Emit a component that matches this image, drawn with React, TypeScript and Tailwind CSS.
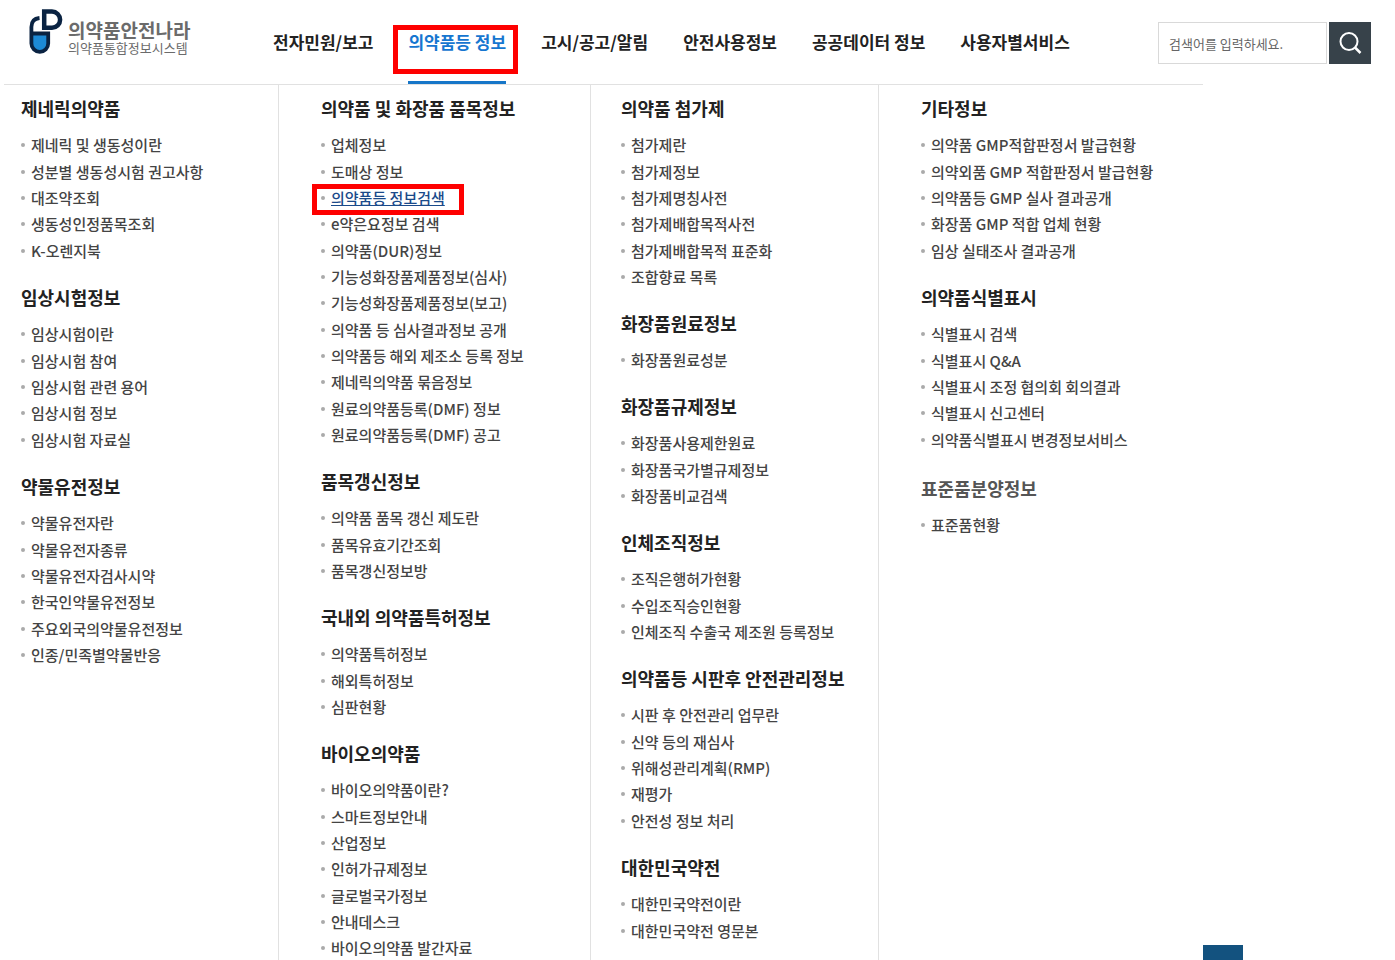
import React from 'react';

type Group = {
  title: string;
  muted?: boolean;
  items: string[];
};

const navItems = [
  '전자민원/보고',
  '의약품등 정보',
  '고시/공고/알림',
  '안전사용정보',
  '공공데이터 정보',
  '사용자별서비스',
];

const columns: { className: string; groups: Group[] }[] = [
  {
    className: 'border-r pl-[17px]',
    groups: [
      {
        title: '제네릭의약품',
        items: ['제네릭 및 생동성이란', '성분별 생동성시험 권고사항', '대조약조회', '생동성인정품목조회', 'K-오렌지북'],
      },
      {
        title: '임상시험정보',
        items: ['임상시험이란', '임상시험 참여', '임상시험 관련 용어', '임상시험 정보', '임상시험 자료실'],
      },
      {
        title: '약물유전정보',
        items: ['약물유전자란', '약물유전자종류', '약물유전자검사시약', '한국인약물유전정보', '주요외국의약물유전정보', '인종/민족별약물반응'],
      },
    ],
  },
  {
    className: 'border-r pl-[42px]',
    groups: [
      {
        title: '의약품 및 화장품 품목정보',
        items: [
          '업체정보',
          '도매상 정보',
          '의약품등 정보검색',
          'e약은요정보 검색',
          '의약품(DUR)정보',
          '기능성화장품제품정보(심사)',
          '기능성화장품제품정보(보고)',
          '의약품 등 심사결과정보 공개',
          '의약품등 해외 제조소 등록 정보',
          '제네릭의약품 묶음정보',
          '원료의약품등록(DMF) 정보',
          '원료의약품등록(DMF) 공고',
        ],
      },
      {
        title: '품목갱신정보',
        items: ['의약품 품목 갱신 제도란', '품목유효기간조회', '품목갱신정보방'],
      },
      {
        title: '국내외 의약품특허정보',
        items: ['의약품특허정보', '해외특허정보', '심판현황'],
      },
      {
        title: '바이오의약품',
        items: ['바이오의약품이란?', '스마트정보안내', '산업정보', '인허가규제정보', '글로벌국가정보', '안내데스크', '바이오의약품 발간자료'],
      },
    ],
  },
  {
    className: 'border-r pl-[30px]',
    groups: [
      {
        title: '의약품 첨가제',
        items: ['첨가제란', '첨가제정보', '첨가제명칭사전', '첨가제배합목적사전', '첨가제배합목적 표준화', '조합향료 목록'],
      },
      { title: '화장품원료정보', items: ['화장품원료성분'] },
      {
        title: '화장품규제정보',
        items: ['화장품사용제한원료', '화장품국가별규제정보', '화장품비교검색'],
      },
      {
        title: '인체조직정보',
        items: ['조직은행허가현황', '수입조직승인현황', '인체조직 수출국 제조원 등록정보'],
      },
      {
        title: '의약품등 시판후 안전관리정보',
        items: ['시판 후 안전관리 업무란', '신약 등의 재심사', '위해성관리계획(RMP)', '재평가', '안전성 정보 처리'],
      },
      { title: '대한민국약전', items: ['대한민국약전이란', '대한민국약전 영문본'] },
    ],
  },
  {
    className: 'pl-[42px]',
    groups: [
      {
        title: '기타정보',
        items: ['의약품 GMP적합판정서 발급현황', '의약외품 GMP 적합판정서 발급현황', '의약품등 GMP 실사 결과공개', '화장품 GMP 적합 업체 현황', '임상 실태조사 결과공개'],
      },
      {
        title: '의약품식별표시',
        items: ['식별표시 검색', '식별표시 Q&A', '식별표시 조정 협의회 회의결과', '식별표시 신고센터', '의약품식별표시 변경정보서비스'],
      },
      { title: '표준품분양정보', muted: true, items: ['표준품현황'] },
    ],
  },
];

const activeNav = '의약품등 정보';
const activeItem = '의약품등 정보검색';

const Logo = () => (
  <a href="#" className="flex w-[245px] shrink-0 items-start pt-2 text-[#6b6b6b]">
    <svg viewBox="0 0 36 48" className="h-12 w-9 shrink-0" fill="none" aria-hidden="true">
      <path d="M4 26h16v10a8 8 0 0 1-16 0z" fill="#1c8ad6" />
      <path d="M16.2 3.6H24a8.1 8.1 0 0 1 0 16.2h-7.8z" stroke="#0a2342" strokeWidth="4.5" />
      <path d="M11.5 10C6.5 10.5 3.4 13.5 3.4 19v16.5a8.4 8.4 0 0 0 16.8 0V25.5H3.4" stroke="#0a2342" strokeWidth="3.8" />
    </svg>
    <span className="flex flex-col pl-1 pt-3">
      <span className="text-[19px] leading-5 font-bold">의약품안전나라</span>
      <span className="text-[13px] leading-4">의약품통합정보시스템</span>
    </span>
  </a>
);

const Header = () => (
  <header className="flex h-[84px] pl-7 pr-6">
    <Logo />
    <nav className="flex gap-[35px]">
      {navItems.map((name) => (
        <a
          key={name}
          href="#"
          className={
            name === activeNav
              ? 'relative border-b-3 border-[#1676c8] text-[17px] leading-[84px] font-bold whitespace-nowrap text-[#1676d0]'
              : 'text-[17px] leading-[84px] font-bold whitespace-nowrap text-[#222]'
          }
        >
          {name}
          {name === activeNav && (
            <span className="absolute top-[25px] -right-3 -left-[15px] h-[49px] border-5 border-[#fe0000]" />
          )}
        </a>
      ))}
    </nav>
    <form className="ml-auto flex items-start gap-0.5 pt-[22px]" onSubmit={(e) => e.preventDefault()}>
      <input
        type="text"
        aria-label="검색어"
        placeholder="검색어를 입력하세요."
        className="h-[42px] w-[169px] border border-[#d9d9d9] px-2.5 text-[13px] outline-none placeholder:text-[#666]"
      />
      <button type="submit" aria-label="검색" className="flex size-[42px] items-center justify-center bg-[#37424a] text-white">
        <svg viewBox="0 0 24 24" className="size-6" fill="none" stroke="currentColor" strokeWidth="2" aria-hidden="true">
          <circle cx="11" cy="10.5" r="8.5" />
          <path d="M17 16.5l5.5 5.5" strokeWidth="2.5" />
        </svg>
      </button>
    </form>
  </header>
);

const MenuGroup = ({ title, muted, items }: Group) => (
  <section className={muted ? 'pt-0.5' : ''}>
    <h2 className={muted ? 'text-[18px] leading-[26px] font-bold text-[#555]' : 'text-[18px] leading-[26px] font-bold text-[#222]'}>
      {title}
    </h2>
    <ul className="mt-[11px]">
      {items.map((item) => (
        <li key={item} className="relative flex items-center text-[15px] leading-[26px] font-medium whitespace-nowrap text-[#444] nth-[3n+1]:not-last:mb-px">
          <span className="mr-1.5 size-1 rounded-full bg-[#aaa]" />
          <a href="#" className={item === activeItem ? 'text-[#1a4a8a] underline' : 'hover:underline'}>
            {item}
          </a>
          {item === activeItem && (
            <span className="absolute -top-px -left-[9px] h-[31px] w-[152px] border-5 border-[#fe0000]" />
          )}
        </li>
      ))}
    </ul>
  </section>
);

export default function App() {
  return (
    <div className="min-h-screen bg-white font-['Noto_Sans_CJK_KR',sans-serif]">
      <Header />
      <main className="ml-1 grid max-w-[1199px] grid-cols-[275fr_312fr_288fr_324fr] border-t border-[#e1e1e1]">
        {columns.map((column, i) => (
          <div key={i} className={`flex flex-col gap-5 border-[#e1e1e1] pt-2.5 ${column.className}`}>
            {column.groups.map((group) => (
              <MenuGroup key={group.title} {...group} />
            ))}
          </div>
        ))}
      </main>
      <button type="button" aria-label="맨 위로" className="fixed right-[152px] bottom-0 h-[15px] w-10 bg-[#13527f]" />
    </div>
  );
}
